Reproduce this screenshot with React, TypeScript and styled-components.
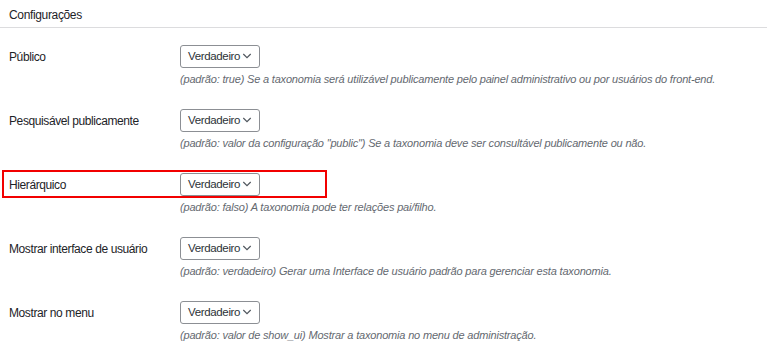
import React from 'react';
import styled, { createGlobalStyle } from 'styled-components';

const GlobalStyle = createGlobalStyle`
  html, body {
    margin: 0;
    padding: 0;
    background: #fff;
  }
  body {
    font-family: 'Liberation Sans', Arial, sans-serif;
    color: #1d2327;
  }
`;

type Setting = {
  label: string;
  description: string;
  highlighted?: boolean;
};

const settings: Setting[] = [
  {
    label: 'Público',
    description:
      '(padrão: true) Se a taxonomia será utilizável publicamente pelo painel administrativo ou por usuários do front-end.',
  },
  {
    label: 'Pesquisável publicamente',
    description:
      '(padrão: valor da configuração "public") Se a taxonomia deve ser consultável publicamente ou não.',
  },
  {
    label: 'Hierárquico',
    description: '(padrão: falso) A taxonomia pode ter relações pai/filho.',
    highlighted: true,
  },
  {
    label: 'Mostrar interface de usuário',
    description:
      '(padrão: verdadeiro) Gerar uma Interface de usuário padrão para gerenciar esta taxonomia.',
  },
  {
    label: 'Mostrar no menu',
    description:
      '(padrão: valor de show_ui) Mostrar a taxonomia no menu de administração.',
  },
];

const App = () => {
  return (
    <>
      <GlobalStyle />
      <Panel>
        <PanelTitle>Configurações</PanelTitle>
        {settings.map((setting) => (
          <Row key={setting.label}>
            <Control $highlighted={setting.highlighted}>
              <Label>{setting.label}</Label>
              <Select>
                <span>Verdadeiro</span>
                <Chevron />
              </Select>
            </Control>
            <Description>{setting.description}</Description>
          </Row>
        ))}
      </Panel>
    </>
  );
};

export default App;

const Chevron = () => (
  <svg width="10" height="10" viewBox="0 0 10 10" fill="none">
    <path d="M1.3 3 L5 6.7 L8.7 3" stroke="#50575e" strokeWidth="1.2" />
  </svg>
);

const Panel = styled.div`
  width: 767px;
  height: 362px;
  overflow: hidden;
  background: #fff;
`;

const PanelTitle = styled.div`
  height: 28px;
  box-sizing: border-box;
  padding: 7px 9px 0;
  border-bottom: 1px solid #dcdcde;

  font-size: 12px;
  line-height: 16px;
  letter-spacing: -0.35px;
  color: #1d2327;
`;

const Row = styled.div`
  height: 64px;
  padding-top: 16px;
  box-sizing: border-box;
`;

const Control = styled.div<{ $highlighted?: boolean }>`
  position: relative;
  display: grid;
  grid-template-columns: 171px auto;
  align-items: center;
  height: 24px;
  padding-left: 9px;

  &::after {
    content: '';
    display: ${(p) => (p.$highlighted ? 'block' : 'none')};
    position: absolute;
    left: 2px;
    top: -2px;
    width: 325px;
    height: 28px;
    box-sizing: border-box;
    border: 2px solid #f20000;
  }
`;

const Label = styled.span`
  padding-top: 2px;
  font-size: 12px;
  line-height: 16px;
  letter-spacing: -0.4px;
  color: #1d2327;
`;

const Select = styled.div`
  display: flex;
  align-items: center;
  justify-content: space-between;
  width: 80px;
  height: 23px;
  box-sizing: border-box;
  padding: 0 7px 0 7px;

  border: 1px solid #8c8f94;
  border-radius: 3px;

  font-size: 11.5px;
  letter-spacing: -0.35px;
  color: #2c3338;
`;

const Description = styled.p`
  margin: 3px 0 0 180px;

  font-size: 11px;
  font-style: italic;
  line-height: 16px;
  letter-spacing: -0.18px;
  color: #646970;
  white-space: nowrap;
`;
